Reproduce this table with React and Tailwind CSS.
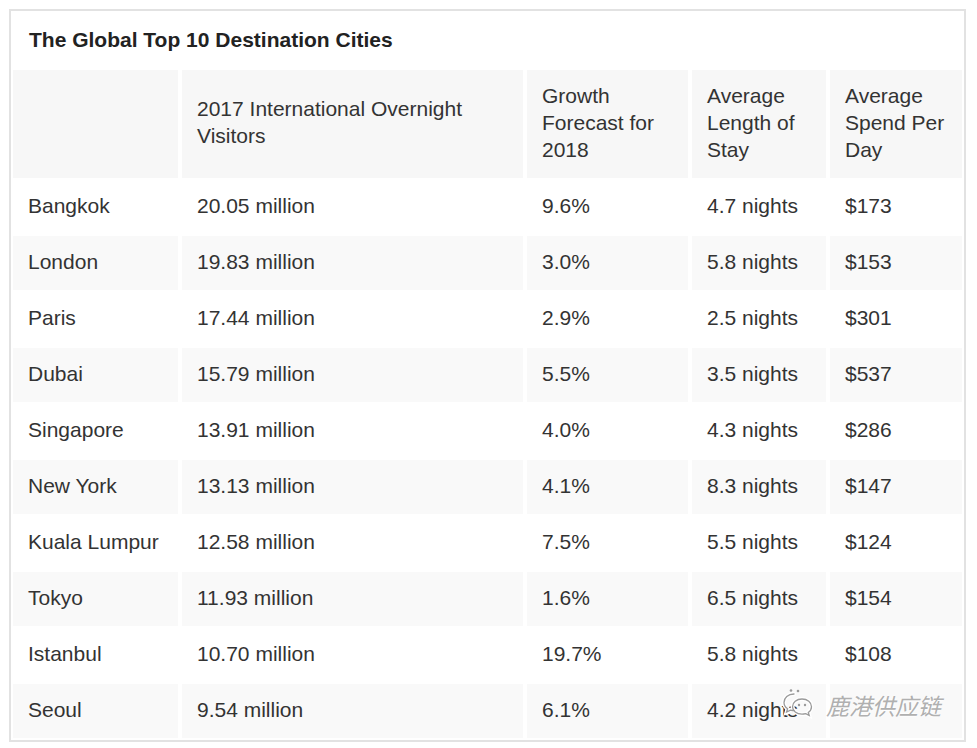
import React from "react";

const rows = [
  ["Bangkok", "20.05 million", "9.6%", "4.7 nights", "$173"],
  ["London", "19.83 million", "3.0%", "5.8 nights", "$153"],
  ["Paris", "17.44 million", "2.9%", "2.5 nights", "$301"],
  ["Dubai", "15.79 million", "5.5%", "3.5 nights", "$537"],
  ["Singapore", "13.91 million", "4.0%", "4.3 nights", "$286"],
  ["New York", "13.13 million", "4.1%", "8.3 nights", "$147"],
  ["Kuala Lumpur", "12.58 million", "7.5%", "5.5 nights", "$124"],
  ["Tokyo", "11.93 million", "1.6%", "6.5 nights", "$154"],
  ["Istanbul", "10.70 million", "19.7%", "5.8 nights", "$108"],
  ["Seoul", "9.54 million", "6.1%", "4.2 nights", ""],
];

const header = [
  "",
  "2017 International Overnight Visitors",
  "Growth Forecast for 2018",
  "Average Length of Stay",
  "Average Spend Per Day",
];

const gridCls =
  "grid grid-cols-[165px_341px_161px_134px_132px] gap-x-[4px]";

function WeChatIcon() {
  return (
    <svg width="36" height="34" viewBox="0 0 36 34" fill="none">
      <g stroke="#ffffff" strokeWidth="4" strokeLinecap="round">
        <path d="M14 6c-6 0-10 4-10 8.5 0 2.6 1.4 4.8 3.6 6.3L6.6 24l3.8-1.9c1.1.3 2.3.5 3.6.5" />
        <path d="M22 11c5.5 0 9.5 3.6 9.5 7.8 0 2.3-1.2 4.3-3.2 5.7l.9 2.9-3.4-1.7c-1.2.3-2.5.5-3.8.5-5.5 0-9.5-3.5-9.5-7.4 0-4.2 4-7.8 9.5-7.8z" />
      </g>
      <g stroke="#9a9a9a" strokeWidth="1.3" strokeLinecap="round">
        <path d="M14 6c-6 0-10 4-10 8.5 0 2.6 1.4 4.8 3.6 6.3L6.6 24l3.8-1.9c1.1.3 2.3.5 3.6.5" />
        <path d="M22 11c5.5 0 9.5 3.6 9.5 7.8 0 2.3-1.2 4.3-3.2 5.7l.9 2.9-3.4-1.7c-1.2.3-2.5.5-3.8.5-5.5 0-9.5-3.5-9.5-7.4 0-4.2 4-7.8 9.5-7.8z" />
      </g>
      <circle cx="11" cy="2.5" r="1.3" fill="#9a9a9a" />
      <circle cx="18" cy="3" r="1.3" fill="#9a9a9a" />
      <circle cx="19" cy="17" r="1.2" fill="#9a9a9a" />
      <circle cx="25" cy="17" r="1.2" fill="#9a9a9a" />
    </svg>
  );
}

export default function App() {
  return (
    <div className="w-[977px] h-[748px] bg-white relative font-['Liberation_Sans',Arial,sans-serif] text-[#333333]">
      <div className="absolute left-[9px] top-[9px] w-[957px] border-2 border-[#e2e2e2]">
        <div className="flex flex-col gap-y-[2px] p-[2px]">
          <div className="h-[55px] pl-[16px] pb-[2px] flex items-center text-[21px] font-bold text-[#222222]">
            The Global Top 10 Destination Cities
          </div>
          <div className={gridCls + " h-[108px]"}>
            {header.map((h, i) => (
              <div
                key={i}
                className="bg-[#f7f7f7] flex items-center pl-[15px] pr-[8px] pb-[4px] text-[21px] leading-[27px]"
              >
                {h}
              </div>
            ))}
          </div>
          {rows.map((r, ri) => (
            <div key={ri} className={gridCls + " h-[54px]"}>
              {r.map((c, ci) => (
                <div
                  key={ci}
                  className={
                    (ri % 2 === 1 ? "bg-[#f9f9f9] " : "bg-white ") +
                    "flex items-center pl-[15px] pb-[3px] text-[21px] leading-[27px]"
                  }
                >
                  {c}
                </div>
              ))}
            </div>
          ))}
        </div>
      </div>
      <div className="absolute left-[780px] top-[688px] flex items-center gap-[10px]">
        <WeChatIcon />
        <span className="text-[23px] italic text-[#b0b0b0] font-['Noto_Sans_CJK_SC',sans-serif] [text-shadow:0_0_2px_#ffffff,0_0_2px_#ffffff,0_0_3px_#ffffff]">
          鹿港供应链
        </span>
      </div>
    </div>
  );
}
